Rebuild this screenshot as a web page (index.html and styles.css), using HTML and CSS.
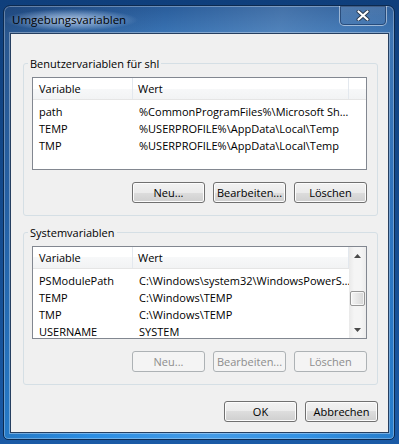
FILE: index.html
```html
<!DOCTYPE html>
<html lang="de">
<head>
    <meta charset="UTF-8">
    <title>Umgebungsvariablen</title>
    <link rel="stylesheet" href="styles.css">
</head>
<body>
    <div class="window">
        <div class="titlebar">
            <span class="title">Umgebungsvariablen</span>
            <div class="close">
                <svg width="14" height="11" viewBox="0 0 14 11">
                    <path d="M2.5 1.5 L11.5 9.5 M11.5 1.5 L2.5 9.5" stroke="#2b3a4f" stroke-width="4" stroke-linecap="round"/>
                    <path d="M2.5 1.5 L11.5 9.5 M11.5 1.5 L2.5 9.5" stroke="#ffffff" stroke-width="2.2" stroke-linecap="round"/>
                </svg>
            </div>
        </div>

        <div class="client">
            <fieldset class="group">
                <legend>Benutzervariablen für shl</legend>
                <div class="list">
                    <div class="list-main">
                        <div class="list-head">
                            <div class="col-var">Variable</div>
                            <div class="col-val">Wert</div>
                            <div class="col-rest"></div>
                        </div>
                        <div class="list-body">
                            <div class="row"><div class="col-var">path</div><div class="col-val">%CommonProgramFiles%\Microsoft Sh…</div></div>
                            <div class="row"><div class="col-var">TEMP</div><div class="col-val">%USERPROFILE%\AppData\Local\Temp</div></div>
                            <div class="row"><div class="col-var">TMP</div><div class="col-val">%USERPROFILE%\AppData\Local\Temp</div></div>
                        </div>
                    </div>
                </div>
                <div class="buttons">
                    <button class="btn">Neu...</button>
                    <button class="btn">Bearbeiten...</button>
                    <button class="btn">Löschen</button>
                </div>
            </fieldset>

            <fieldset class="group group-sys">
                <legend>Systemvariablen</legend>
                <div class="list list-scroll">
                    <div class="list-main">
                        <div class="list-head">
                            <div class="col-var">Variable</div>
                            <div class="col-val">Wert</div>
                        </div>
                        <div class="list-body">
                            <div class="row"><div class="col-var">PSModulePath</div><div class="col-val">C:\Windows\system32\WindowsPowerS…</div></div>
                            <div class="row"><div class="col-var">TEMP</div><div class="col-val">C:\Windows\TEMP</div></div>
                            <div class="row"><div class="col-var">TMP</div><div class="col-val">C:\Windows\TEMP</div></div>
                            <div class="row"><div class="col-var">USERNAME</div><div class="col-val">SYSTEM</div></div>
                        </div>
                    </div>
                    <div class="scrollbar">
                        <div class="arrow">
                            <svg width="7" height="4" viewBox="0 0 7 4"><path d="M0 4 L3.5 0 L7 4 Z" fill="#4a4a4a"/></svg>
                        </div>
                        <div class="track">
                            <div class="thumb"></div>
                        </div>
                        <div class="arrow">
                            <svg width="7" height="4" viewBox="0 0 7 4"><path d="M0 0 L7 0 L3.5 4 Z" fill="#4a4a4a"/></svg>
                        </div>
                    </div>
                </div>
                <div class="buttons">
                    <button class="btn" disabled>Neu...</button>
                    <button class="btn" disabled>Bearbeiten...</button>
                    <button class="btn" disabled>Löschen</button>
                </div>
            </fieldset>

            <div class="dialog-buttons">
                <button class="btn">OK</button>
                <button class="btn">Abbrechen</button>
            </div>
        </div>
    </div>
</body>
</html>
```

FILE: styles.css
```css
* {
    box-sizing: border-box;
}
html, body {
    margin: 0;
}
body {
    width: 399px;
    height: 444px;
    overflow: hidden;
    padding: 5px 4px 0 3px;
    background: linear-gradient(to bottom, #0f3f7c 0, #164e92 60%, #1a5aa6 100%);
    font-family: "Open Sans", "Noto Sans", sans-serif;
    font-size: 11px;
    color: #000;
}
.window {
    width: 392px;
    height: 435px;
    border: 1px solid #0c2a50;
    border-radius: 7px 7px 5px 5px;
    padding: 0 5px 6px 6px;
    display: flex;
    flex-direction: column;
    background:
        linear-gradient(100deg, rgba(10, 30, 70, 0.35) 0, rgba(255, 255, 255, 0) 35%, rgba(255, 255, 255, 0.12) 60%, rgba(255, 255, 255, 0.04) 80%, rgba(10, 30, 70, 0.15) 100%),
        linear-gradient(to bottom, #2a5d9b 0, #3a74b4 28px, #2f78c6 45%, #2b8ee4 100%);
    box-shadow: inset 0 0 0 1px rgba(255, 255, 255, 0.3);
}

/* Titelleiste */
.titlebar {
    height: 27px;
    display: flex;
    align-items: flex-start;
    padding-right: 2px;
}
.title {
    margin: 3px 0 0 -6px;
    padding: 3px 12px 4px 8px;
    line-height: 15px;
    font-size: 11.5px;
    color: #000;
    background: radial-gradient(ellipse closest-side, rgba(225, 238, 255, 0.7) 0, rgba(200, 222, 250, 0.4) 55%, rgba(200, 222, 250, 0) 100%);
}
.close {
    margin-left: auto;
    width: 48px;
    height: 20px;
    display: flex;
    align-items: center;
    justify-content: center;
    border: 1px solid rgba(255, 255, 255, 0.45);
    border-top: none;
    border-radius: 0 0 5px 5px;
    background: linear-gradient(to bottom, rgba(255, 255, 255, 0.12), rgba(255, 255, 255, 0.04));
    box-shadow: inset 0 0 0 1px rgba(15, 40, 80, 0.55);
}

/* Inhalt */
.client {
    flex: 1;
    background: #f0f0f0;
    border: 1px solid #263f60;
    box-shadow: 0 0 0 1px rgba(255, 255, 255, 0.35);
    padding: 22px 10px 0 12px;
    display: flex;
    flex-direction: column;
}
.group {
    margin: 0;
    min-width: 0;
    padding: 6px 10px 12px 8px;
    border: 1px solid #d5dfe5;
    border-radius: 3px;
}
.group legend {
    margin-left: -4px;
    padding: 0 2px;
    line-height: 15px;
}
.group-sys {
    margin-top: 9px;
}

/* Listenansicht */
.list {
    height: 93px;
    border: 1px solid #828790;
    background: #fff;
    display: flex;
    overflow: hidden;
}
.list-main {
    flex: 1;
    min-width: 0;
}
.list-head {
    height: 22px;
    display: flex;
    border-bottom: 1px solid #e5e5e5;
    background: linear-gradient(to bottom, #fff 0, #fff 50%, #f7f8f9 50%, #f2f3f4 100%);
}
.list-head > div {
    line-height: 21px;
    border-right: 1px solid #e3e8ee;
}
.list-head .col-rest {
    flex: 1;
    border-right: none;
}
.col-var {
    width: 100px;
    padding-left: 6px;
    flex-shrink: 0;
}
.col-val {
    width: 216px;
    padding-left: 6px;
    flex-shrink: 0;
    white-space: nowrap;
    overflow: hidden;
}
.list-head .col-val {
    padding-left: 5px;
}
.list-body {
    padding-top: 3px;
}
.row {
    display: flex;
    height: 17px;
    line-height: 17px;
}

/* Bildlaufleiste */
.scrollbar {
    width: 17px;
    display: flex;
    flex-direction: column;
    background: linear-gradient(to right, #e9e9e9, #f5f5f5 30%, #f5f5f5 70%, #ececec);
}
.arrow {
    height: 17px;
    display: flex;
    align-items: center;
    justify-content: center;
}
.track {
    flex: 1;
    padding: 0 1px;
}
.thumb {
    margin-top: 27px;
    height: 15px;
    border: 1px solid #979797;
    border-radius: 2px;
    background: linear-gradient(to right, #f5f5f5, #e6e6e6 50%, #d6d6d6);
    box-shadow: inset 0 0 0 1px rgba(255, 255, 255, 0.7);
}

/* Schaltflächen */
.buttons {
    display: flex;
    justify-content: flex-end;
    gap: 8px;
    margin-top: 12px;
}
.btn {
    width: 73px;
    height: 21px;
    padding: 0;
    font-family: inherit;
    font-size: 11px;
    color: #000;
    border: 1px solid #707070;
    border-radius: 3px;
    background: linear-gradient(to bottom, #f2f2f2 0, #ebebeb 50%, #dddddd 50%, #cfcfcf 100%);
    box-shadow: inset 0 0 0 1px #fcfcfc;
}
.btn:disabled {
    color: #8d8d8d;
    border-color: #adb2b5;
    background: #f4f4f4;
    box-shadow: none;
}
.dialog-buttons {
    display: flex;
    justify-content: flex-end;
    gap: 8px;
    margin-top: 16px;
}
```
